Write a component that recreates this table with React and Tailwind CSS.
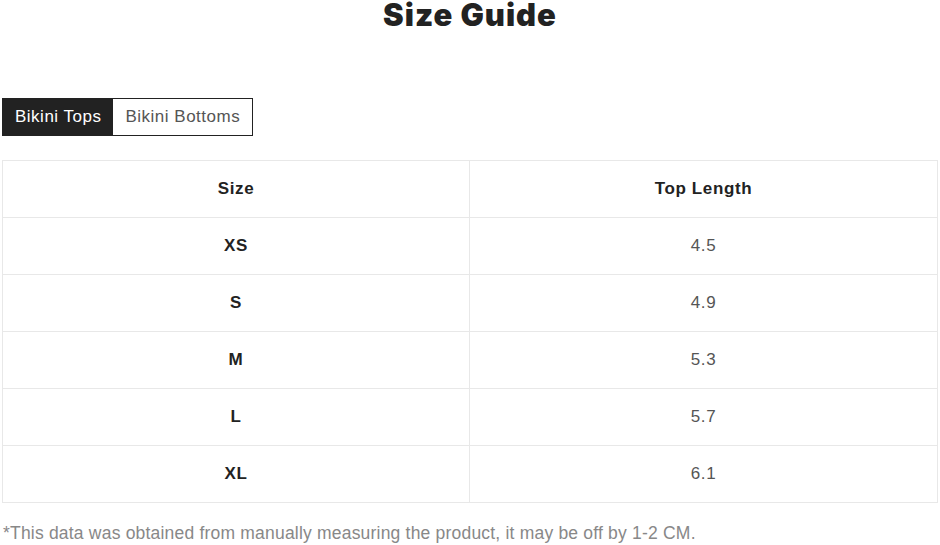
import React, { useState } from "react";

const rows = [
  ["XS", "4.5"],
  ["S", "4.9"],
  ["M", "5.3"],
  ["L", "5.7"],
  ["XL", "6.1"],
];

export default function App() {
  const [tab, setTab] = useState("tops");

  return (
    <div className="w-[940px] h-[545px] bg-white overflow-hidden font-['Liberation_Sans',Arial,sans-serif]">
      <h1 className="text-center text-[31px] leading-[30px] font-black text-[#222] font-['Inter',sans-serif] tracking-[1px]">
        Size Guide
      </h1>

      <div className="mt-[68px] ml-[2px] flex w-fit border border-[#222]">
        <button
          onClick={() => setTab("tops")}
          className={
            tab === "tops"
              ? "h-[36px] px-[12px] bg-[#222] text-white text-[17px] tracking-[0.5px]"
              : "h-[36px] px-[12px] bg-white text-[#555] text-[17px] tracking-[0.5px]"
          }
        >
          Bikini Tops
        </button>
        <button
          onClick={() => setTab("bottoms")}
          className={
            tab === "bottoms"
              ? "h-[36px] px-[12px] bg-[#222] text-white text-[17px] tracking-[0.5px]"
              : "h-[36px] px-[12px] bg-white text-[#555] text-[17px] tracking-[0.5px]"
          }
        >
          Bikini Bottoms
        </button>
      </div>

      <table className="mt-[24px] ml-[2px] w-[936px] border-collapse text-[17px] tracking-[0.6px]">
        <thead>
          <tr className="h-[57px]">
            <th className="w-[467px] border border-[#e8e8e8] font-bold text-[#222]">Size</th>
            <th className="border border-[#e8e8e8] font-bold text-[#222]">
              {tab === "tops" ? "Top Length" : "Bottom Length"}
            </th>
          </tr>
        </thead>
        <tbody>
          {rows.map(([size, len]) => (
            <tr key={size} className="h-[57px]">
              <td className="border border-[#e8e8e8] text-center font-bold text-[#222]">{size}</td>
              <td className="border border-[#e8e8e8] text-center text-[#555]">{len}</td>
            </tr>
          ))}
        </tbody>
      </table>

      <p className="mt-[17px] ml-[3px] text-[17.5px] tracking-[0.2px] text-[#888]">
        *This data was obtained from manually measuring the product, it may be off by 1-2 CM.
      </p>
    </div>
  );
}
